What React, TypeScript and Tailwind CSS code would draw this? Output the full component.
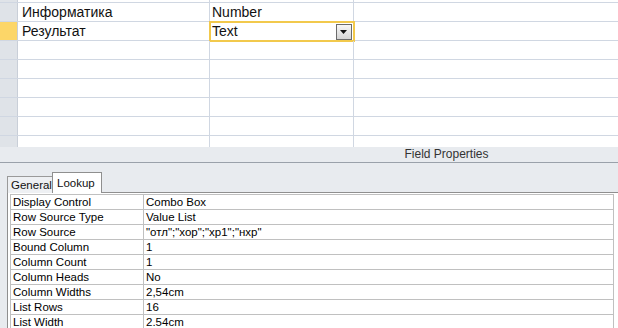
import React from 'react';

type Field = { name: string; type: string; selected?: boolean };

const fields: Field[] = [
  { name: 'Информатика', type: 'Number' },
  { name: 'Результат', type: 'Text', selected: true },
  { name: '', type: '' },
  { name: '', type: '' },
  { name: '', type: '' },
  { name: '', type: '' },
  { name: '', type: '' },
];

const props: [string, string][] = [
  ['Display Control', 'Combo Box'],
  ['Row Source Type', 'Value List'],
  ['Row Source', '"отл";"хор";"хр1";"нхр"'],
  ['Bound Column', '1'],
  ['Column Count', '1'],
  ['Column Heads', 'No'],
  ['Column Widths', '2,54cm'],
  ['List Rows', '16'],
  ['List Width', '2.54cm'],
];

const GridRow: React.FC<{ field: Field }> = ({ field }) => (
  <div className="relative flex h-[19px] border-b border-[#d0d7e2]">
    <div
      className={`w-[18px] shrink-0 border-r border-[#c9cfd8] ${
        field.selected ? 'bg-[#fcd668]' : 'bg-[#dfe3e8]'
      }`}
    />
    <div className="w-[192px] shrink-0 border-r border-[#d0d7e2] pl-[4px] text-[14px] leading-[18px] text-[#111]">
      {field.name}
    </div>
    <div className="w-[144px] shrink-0 border-r border-[#d0d7e2] pl-[2px] text-[14px] leading-[18px] text-[#111]">
      {field.selected ? '' : field.type}
    </div>
    <div className="flex-1" />
    {field.selected && (
      <div className="absolute left-[209px] top-[-1px] w-[146px] h-[21px] border-2 border-[#f2c94c] flex items-center justify-between pl-[1px] pr-[1px] text-[14px] text-[#111]">
        <span className="leading-[17px]">{field.type}</span>
        <div className="w-[16px] h-[16px] border border-[#6b6b6b] bg-gradient-to-b from-[#f7f7f7] to-[#d4d4d4] flex items-center justify-center">
          <svg width="8" height="4" viewBox="0 0 8 4">
            <path d="M0 0 H7 L3.5 4 Z" fill="#111" />
          </svg>
        </div>
      </div>
    )}
  </div>
);

export default function App() {
  return (
    <div className="w-[618px] h-[328px] overflow-hidden bg-white font-['Liberation_Sans',Arial,sans-serif] flex flex-col">
      {/* design grid */}
      <div className="flex flex-col">
        <div className="flex h-[3px] border-b border-[#d0d7e2]">
          <div className="w-[18px] bg-[#dfe3e8] border-r border-[#c9cfd8]" />
          <div className="w-[192px] border-r border-[#d0d7e2]" />
          <div className="w-[144px] border-r border-[#d0d7e2]" />
        </div>
        {fields.map((f, i) => (
          <GridRow key={i} field={f} />
        ))}
        <div className="flex h-[11px]">
          <div className="w-[18px] bg-[#dfe3e8] border-r border-[#c9cfd8]" />
          <div className="w-[192px] border-r border-[#d0d7e2]" />
          <div className="w-[144px] border-r border-[#d0d7e2]" />
        </div>
      </div>

      {/* field properties */}
      <div className="flex-1 bg-[#e8ebef] flex flex-col">
        <div className="h-[16px] border-b border-[#9aa1aa] flex justify-center pl-[275px] text-[12px] leading-[15px] text-[#333]">
          Field Properties
        </div>
        <div className="relative h-[29px]">
          <div className="absolute left-[7px] top-[13px] h-[17px] w-[47px] border border-[#9a9a9a] border-b-0 bg-[#eef0f3] pl-[3px] text-[11.5px] leading-[17px] text-[#111]">
            General
          </div>
          <div className="absolute left-[52px] top-[9px] h-[21px] w-[50px] border border-[#8f8f8f] border-b-0 bg-white z-10 pl-[4px] pt-[2px] text-[11.5px] leading-[16px] text-[#111]">
            Lookup
          </div>
        </div>
        <div className="flex-1 ml-[7px] bg-white border-l border-t border-[#8f8f8f] pl-[2px] pt-[1px]">
          <div className="w-[604px] border-t border-l border-r border-[#c0c0c0]">
            {props.map(([k, v]) => (
              <div key={k} className="flex h-[15px] border-b border-[#c0c0c0] text-[11.5px] leading-[14px] text-black">
                <div className="w-[133px] shrink-0 border-r border-[#c0c0c0] pl-[2px]">{k}</div>
                <div className="flex-1 pl-[2px]">{v}</div>
              </div>
            ))}
          </div>
        </div>
      </div>
    </div>
  );
}
